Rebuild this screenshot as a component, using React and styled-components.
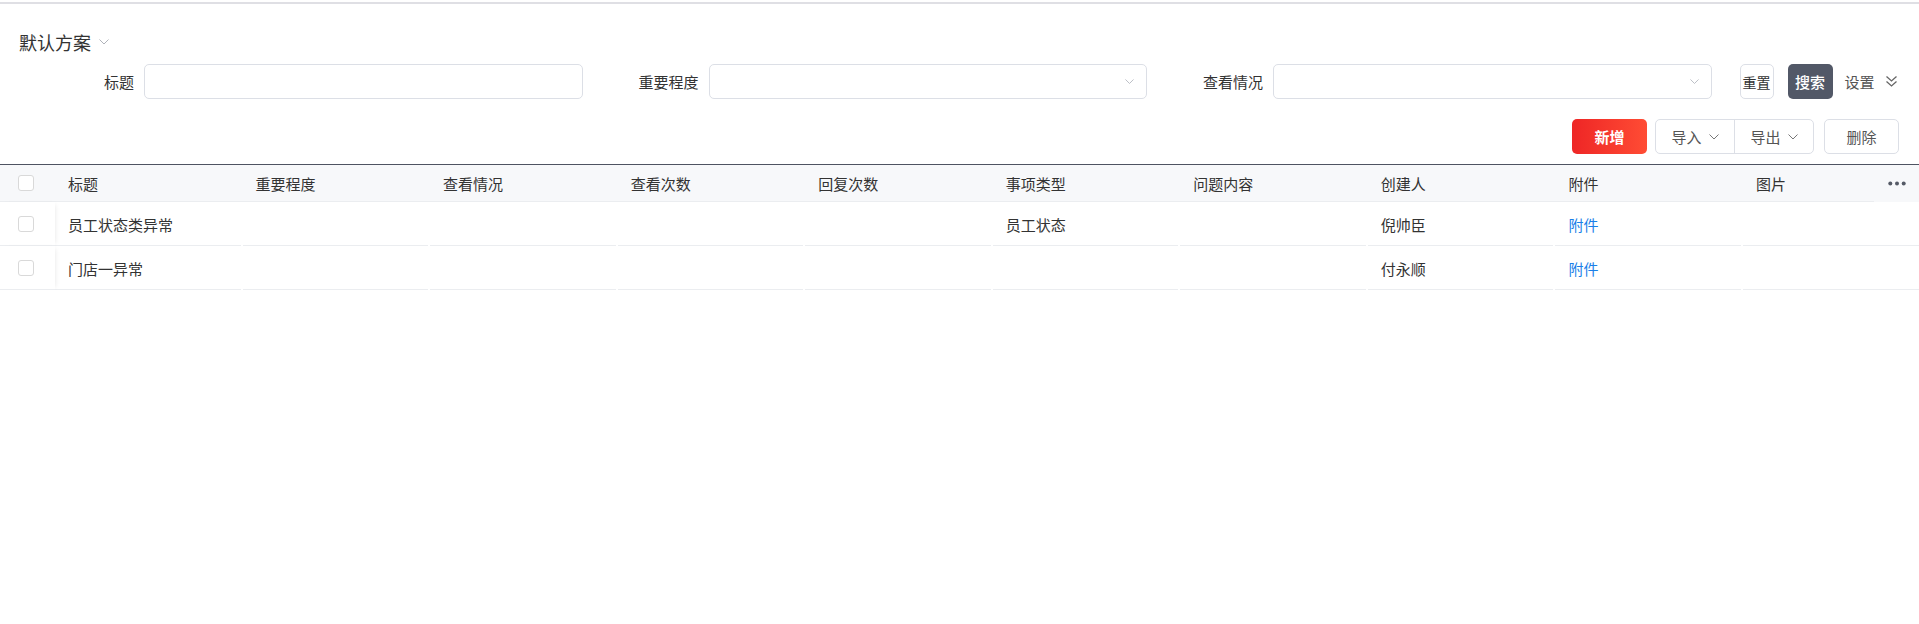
import React from 'react'
import styled, {createGlobalStyle} from 'styled-components'

const COLORS = {
  TEXT: '#333333',
  BORDER: '#dcdfe6',
  LINE: '#ebedf0',
  HEAD_BG: '#f7f8fa',
  DARK: '#525867',
  LINK: '#1a7fe8',
}

const COL_W = 187.55

const GlobalStyle = createGlobalStyle`
  body {
    margin: 0;
    background: #fff;
    font-family: "Noto Sans CJK SC", "Noto Sans", sans-serif;
    color: ${COLORS.TEXT};
  }
  * { box-sizing: border-box; }
`

const Page = styled.div`
  margin-top: 2px;
  border-top: 2px solid #dfdfe4;
`

const Filter = styled.div`
  padding: 0 20px 0 18px;
`

const SchemeRow = styled.div`
  margin-top: 25px;
  height: 25px;
  display: flex;
  align-items: center;
  gap: 8px;
  font-size: 18px;
  color: ${COLORS.TEXT};
  padding-left: 1px;
`

const FormRow = styled.div`
  margin-top: 10px;
  height: 35px;
  display: flex;
  align-items: center;
`

const FormItem = styled.div`
  width: 564.5px;
  display: flex;
  align-items: center;
`

const Label = styled.label`
  width: 126px;
  flex-shrink: 0;
  padding-right: 10px;
  text-align: right;
  font-size: 15px;
  color: ${COLORS.TEXT};
`

const Field = styled.div`
  flex: 1;
  height: 35px;
  border: 1px solid ${COLORS.BORDER};
  border-radius: 5px;
  background: #fff;
  display: flex;
  align-items: center;
  justify-content: flex-end;
  padding-right: 12px;
`

const ResetButton = styled.button`
  margin-left: 28px;
  width: 34px;
  height: 35px;
  padding: 0;
  border: 1px solid ${COLORS.BORDER};
  border-radius: 5px;
  background: #fff;
  font-family: inherit;
  font-size: 14px;
  color: ${COLORS.TEXT};
`

const SearchButton = styled.button`
  margin-left: 14px;
  width: 45px;
  height: 35px;
  padding: 0;
  border: none;
  border-radius: 5px;
  background: ${COLORS.DARK};
  font-family: inherit;
  font-size: 15px;
  font-weight: 500;
  color: #fff;
`

const SettingLink = styled.div`
  margin-left: 12px;
  display: flex;
  align-items: center;
  gap: 10px;
  font-size: 15px;
  color: #555;
`

const ToolRow = styled.div`
  margin-top: 20px;
  height: 35px;
  display: flex;
  justify-content: flex-end;
  align-items: center;
`

const PrimaryButton = styled.button`
  width: 75px;
  height: 35px;
  border: none;
  border-radius: 5px;
  background: linear-gradient(90deg, #ee2626, #ff4c34);
  font-family: inherit;
  font-size: 15px;
  font-weight: 700;
  color: #fff;
`

const Group = styled.div`
  margin-left: 8px;
  width: 159px;
  height: 35px;
  display: flex;
  border: 1px solid ${COLORS.BORDER};
  border-radius: 5px;
`

const GroupButton = styled.button`
  flex: 1;
  border: none;
  border-left: ${(p) => (p.$first ? 'none' : `1px solid ${COLORS.BORDER}`)};
  background: transparent;
  display: flex;
  align-items: center;
  justify-content: center;
  gap: 7px;
  font-family: inherit;
  font-size: 15px;
  color: #555;
  padding: 0;
`

const PlainButton = styled.button`
  margin-left: 10px;
  width: 75px;
  height: 35px;
  border: 1px solid ${COLORS.BORDER};
  border-radius: 5px;
  background: #fff;
  font-family: inherit;
  font-size: 15px;
  color: #555;
`

const Table = styled.div`
  margin-top: 10px;
  border-top: 1px solid #4e5361;
`

const Row = styled.div`
  display: grid;
  grid-template-columns: 55px repeat(9, ${COL_W}px) 1fr 45px;
  height: ${(p) => (p.$head ? 37 : 44)}px;
`

const CheckCell = styled.div`
  display: flex;
  align-items: center;
  padding-left: 18px;
  background: ${(p) => (p.$head ? COLORS.HEAD_BG : '#fff')};
  border-bottom: 1px solid ${COLORS.LINE};
  box-shadow: ${(p) => (p.$head ? 'none' : '3px 0 5px -3px rgba(0, 0, 0, 0.1)')};
  position: relative;
  z-index: 1;
`

const Checkbox = styled.span`
  width: 16px;
  height: 16px;
  border: 1px solid #d9d9d9;
  border-radius: 3px;
  background: #fff;
`

const HeadCell = styled.div`
  display: flex;
  align-items: center;
  background: ${COLORS.HEAD_BG};
  border-bottom: 1px solid ${(p) => (p.$noLine ? COLORS.HEAD_BG : COLORS.LINE)};
  font-size: 15px;
  color: ${COLORS.TEXT};
  justify-content: ${(p) => (p.$end ? 'center' : 'flex-start')};
  padding-left: ${(p) => (p.$end ? 0 : 13)}px;
`

const Cell = styled.div`
  display: flex;
  align-items: center;
  padding-left: 13px;
  font-size: 15px;
  color: ${(p) => (p.$link ? COLORS.LINK : COLORS.TEXT)};
  grid-column: ${(p) => p.$span || 'auto'};
  background: linear-gradient(${COLORS.LINE}, ${COLORS.LINE}) no-repeat left bottom /
    ${(p) => (p.$full ? '100%' : 'calc(100% - 2px)')} 1px;
`

const Chevron = ({size = 9, color = '#b4b7bf'}) => (
  <svg width={size} height={size * 0.55} viewBox="0 0 10 5.5" fill="none">
    <polyline points="0.5,0.5 5,5 9.5,0.5" stroke={color} strokeWidth="1" />
  </svg>
)

const DoubleChevron = () => (
  <svg width="13" height="13" viewBox="0 0 13 13" fill="none">
    <polyline points="1.5,1.5 6.5,6 11.5,1.5" stroke="#666" strokeWidth="1.3" />
    <polyline points="1.5,6.5 6.5,11 11.5,6.5" stroke="#666" strokeWidth="1.3" />
  </svg>
)

const Dots = () => (
  <svg width="18" height="5" viewBox="0 0 18 5">
    <circle cx="2.3" cy="2.5" r="2" fill="#555a66" />
    <circle cx="9" cy="2.5" r="2" fill="#555a66" />
    <circle cx="15.7" cy="2.5" r="2" fill="#555a66" />
  </svg>
)

const columns = ['标题', '重要程度', '查看情况', '查看次数', '回复次数', '事项类型', '问题内容', '创建人', '附件', '图片']

const rows = [
  {id: 1, cells: ['员工状态类异常', '', '', '', '', '员工状态', '', '倪帅臣', '附件', '']},
  {id: 2, cells: ['门店一异常', '', '', '', '', '', '', '付永顺', '附件', '']},
]

const App = () => {
  return (
    <Page>
      <GlobalStyle />
      <Filter>
        <SchemeRow>
          <span>默认方案</span>
          <Chevron size={10} color="#b0b3ba" />
        </SchemeRow>
        <FormRow>
          <FormItem>
            <Label>标题</Label>
            <Field />
          </FormItem>
          <FormItem>
            <Label>重要程度</Label>
            <Field>
              <Chevron />
            </Field>
          </FormItem>
          <FormItem>
            <Label>查看情况</Label>
            <Field>
              <Chevron />
            </Field>
          </FormItem>
          <ResetButton>重置</ResetButton>
          <SearchButton>搜索</SearchButton>
          <SettingLink>
            设置
            <DoubleChevron />
          </SettingLink>
        </FormRow>
        <ToolRow>
          <PrimaryButton>新增</PrimaryButton>
          <Group>
            <GroupButton $first>
              导入 <Chevron size={10} color="#777" />
            </GroupButton>
            <GroupButton>
              导出 <Chevron size={10} color="#777" />
            </GroupButton>
          </Group>
          <PlainButton>删除</PlainButton>
        </ToolRow>
      </Filter>

      <Table>
        <Row $head>
          <CheckCell $head>
            <Checkbox />
          </CheckCell>
          {columns.map((c) => (
            <HeadCell key={c}>{c}</HeadCell>
          ))}
          <HeadCell $end $noLine>
            <Dots />
          </HeadCell>
        </Row>
        {rows.map((r) => (
          <Row key={r.id}>
            <CheckCell>
              <Checkbox />
            </CheckCell>
            {r.cells.map((v, i) => (
              <Cell
                key={i}
                $link={i === 8}
                $full={i === 9}
                $span={i === 9 ? 'span 2' : undefined}
              >
                {v}
              </Cell>
            ))}
          </Row>
        ))}
      </Table>
    </Page>
  )
}

export default App
